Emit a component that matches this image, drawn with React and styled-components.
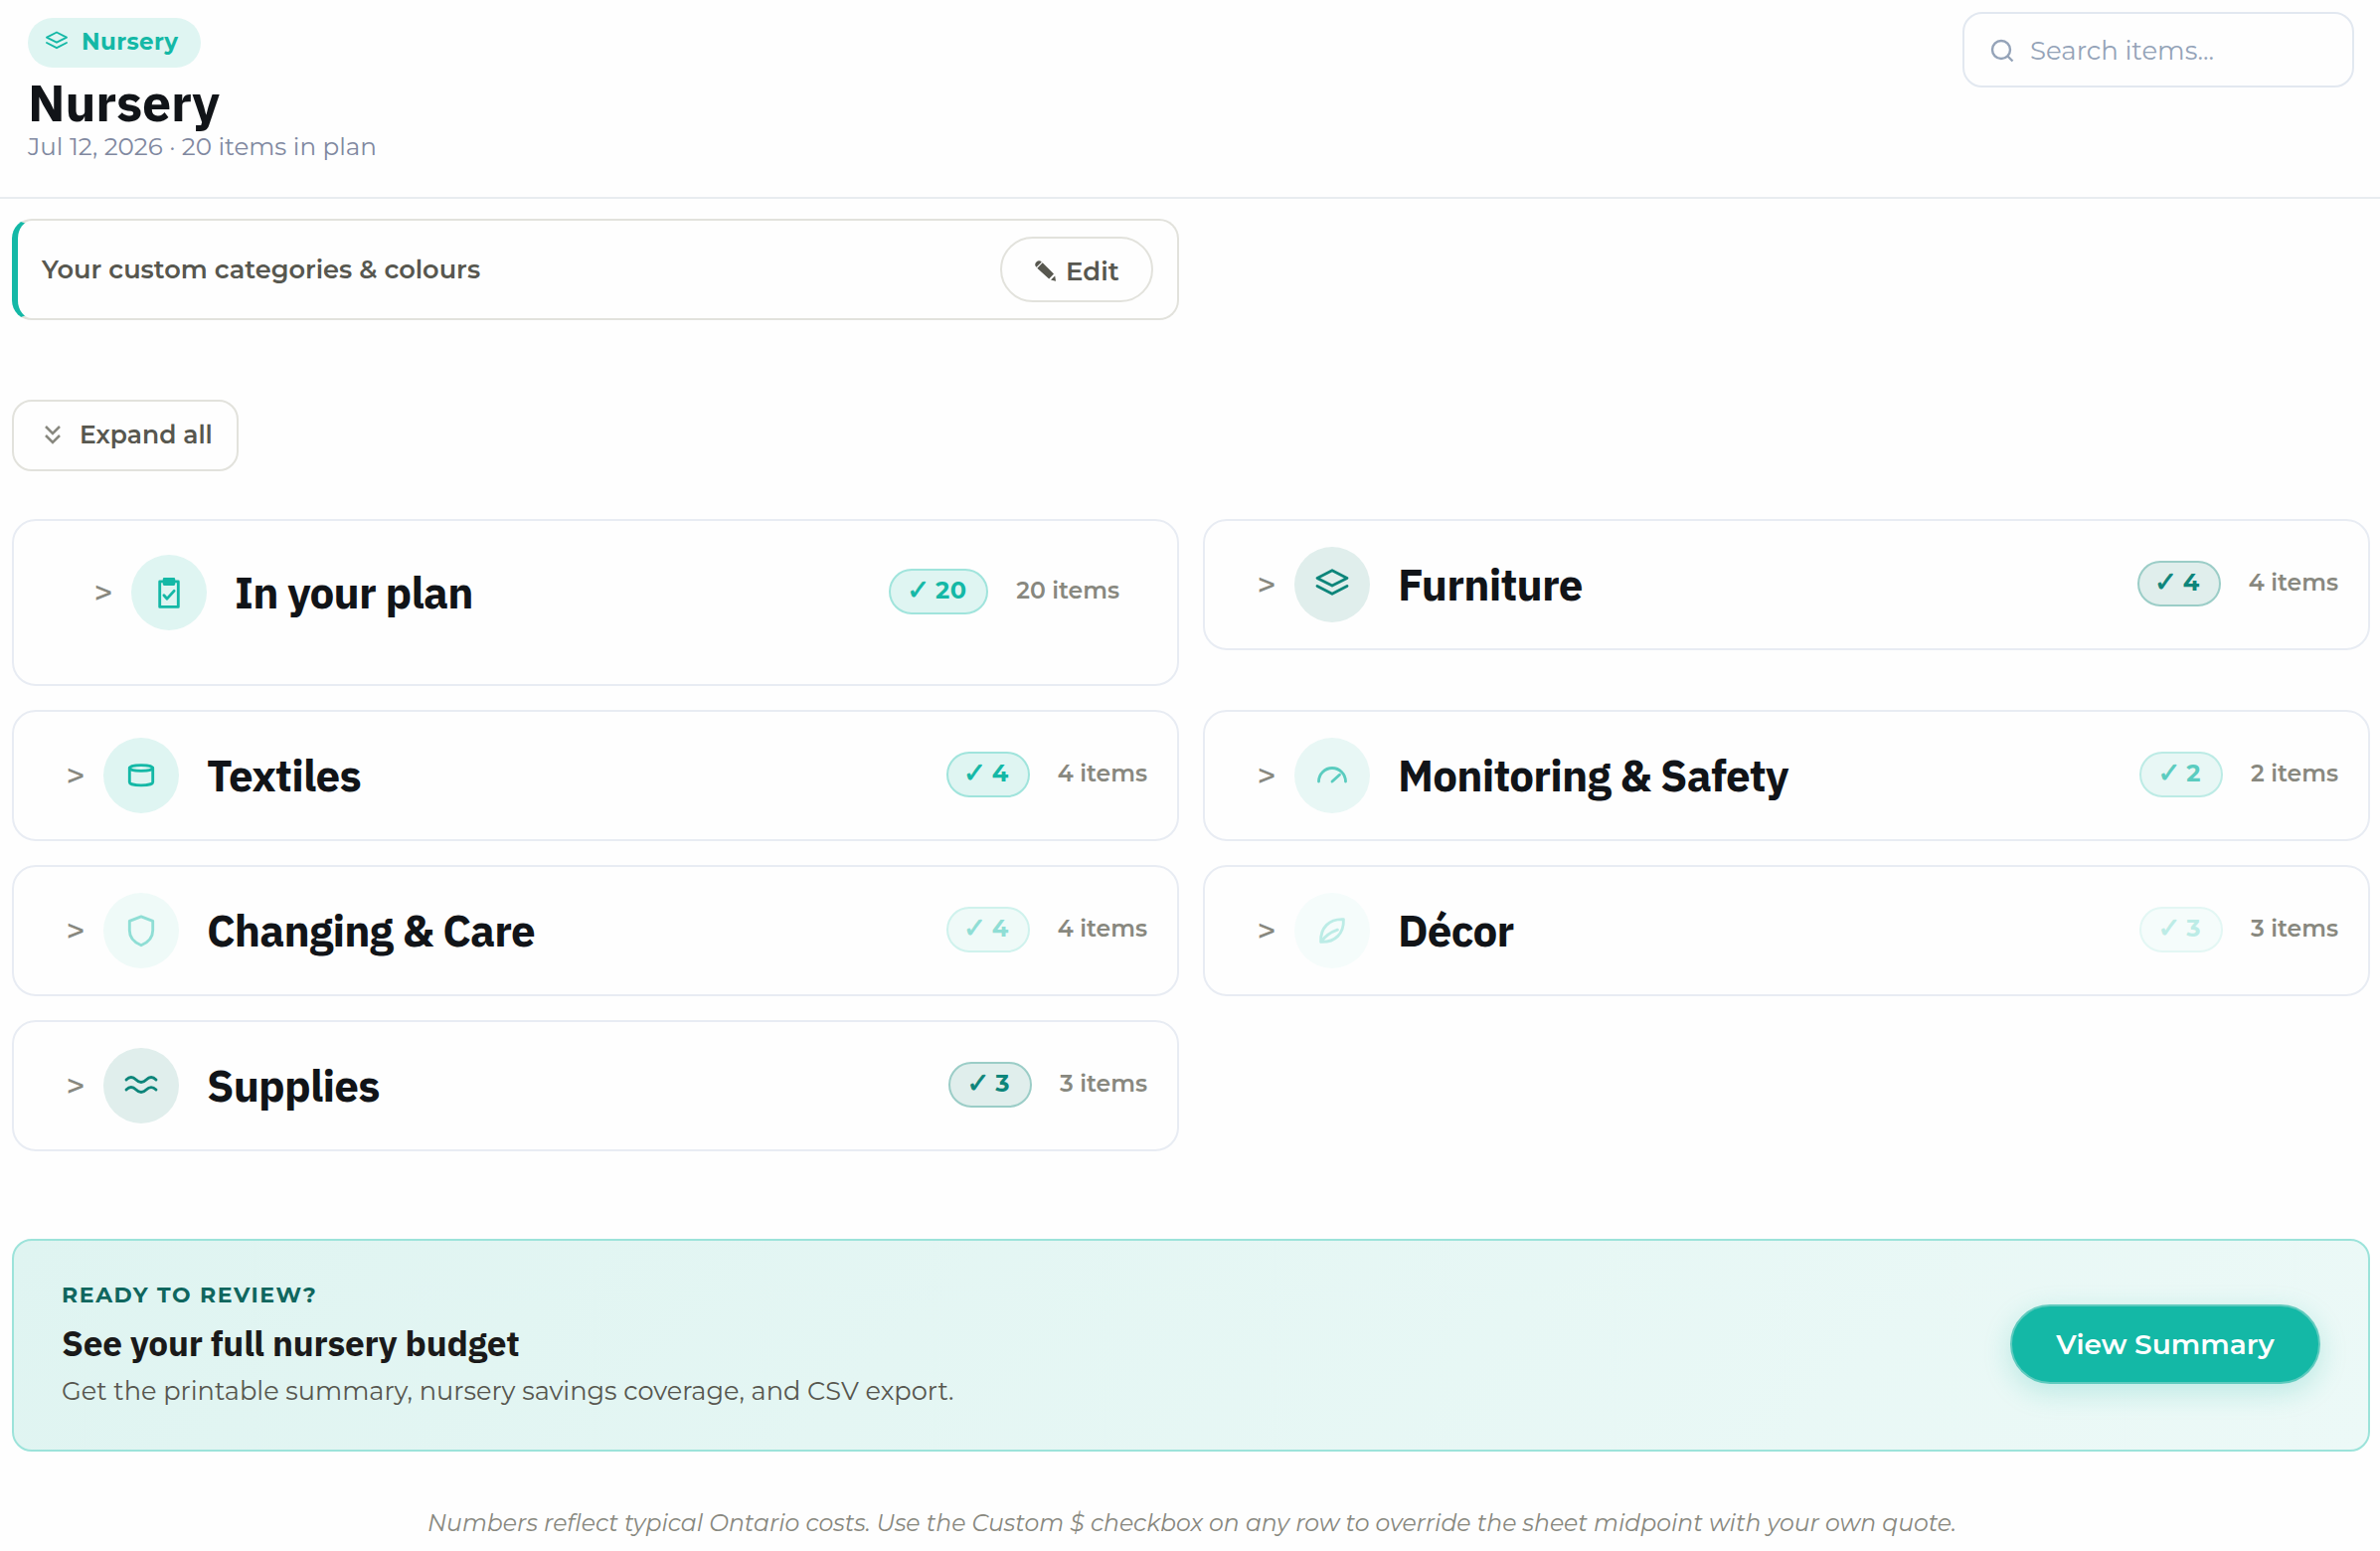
import styled, { createGlobalStyle } from 'styled-components';

const GlobalStyle = createGlobalStyle`
  * {
    box-sizing: border-box;
  }
  body {
    margin: 0;
    background: #fefefe;
    font-family: Montserrat, 'DejaVu Sans', sans-serif;
    color: #57574f;
  }
  button {
    font-family: inherit;
  }
`;

const headingFont = `'IBM Plex Sans', Roboto, 'Noto Sans', sans-serif`;

const Page = styled.div`
  min-height: 1560px;
`;

const Header = styled.header`
  display: flex;
  justify-content: space-between;
  align-items: flex-start;
  height: 200px;
  padding: 12px 26px 0 28px;
  border-bottom: 2px solid #e8ecf0;
`;

const HeaderInfo = styled.div`
  display: flex;
  flex-direction: column;
  align-items: flex-start;
  padding-top: 6px;
`;

const Pill = styled.div`
  display: flex;
  align-items: center;
  gap: 13px;
  width: 174px;
  height: 50px;
  padding: 0 0 2px 17px;
  border-radius: 25px;
  background: #dff5f2;
  color: #14b8a6;
  font-size: 23px;
  font-weight: 700;
  line-height: 28px;
  letter-spacing: 0.4px;
`;

const Title = styled.h1`
  margin: 7px 0 2px;
  font-family: ${headingFont};
  font-size: 52px;
  line-height: 55px;
  font-weight: 700;
  letter-spacing: -0.2px;
  color: #111418;
`;

const Subtitle = styled.div`
  font-size: 24.6px;
  line-height: 30px;
  color: #8088a0;
`;

const Search = styled.div`
  display: flex;
  align-items: center;
  gap: 16px;
  width: 394px;
  height: 76px;
  padding: 1px 0 0 26px;
  border: 2px solid #e2e8f0;
  border-radius: 20px;
  background: #fefefe;
  color: #94a3b8;
  font-size: 26px;
`;

const Main = styled.main`
  padding: 20px 10px 0 12px;
`;

const CustomBar = styled.div`
  display: flex;
  align-items: center;
  justify-content: space-between;
  width: 1174px;
  height: 102px;
  padding: 0 24px;
  border: 2px solid #e2e2dc;
  border-left: 6px solid #14b8a6;
  border-radius: 20px;
  font-size: 25.65px;
  font-weight: 600;
  line-height: 30px;
`;

const EditButton = styled.button`
  display: flex;
  align-items: center;
  gap: 9px;
  width: 154px;
  height: 66px;
  padding: 3px 0 0 33px;
  border: 2px solid #e2e2dc;
  border-radius: 33px;
  background: transparent;
  color: #57574f;
  font-size: 26px;
  font-weight: 600;
`;

const ExpandButton = styled.button`
  display: flex;
  align-items: center;
  gap: 16px;
  width: 228px;
  height: 72px;
  margin: 80px 0 48px;
  padding: 0 0 2px 28px;
  border: 2px solid #e2e2dc;
  border-radius: 20px;
  background: transparent;
  color: #57574f;
  font-size: 25px;
  font-weight: 600;
  white-space: nowrap;
`;

const Grid = styled.div`
  display: grid;
  grid-template-columns: 1fr 1fr;
  align-items: start;
  gap: 24px;
`;

const Card = styled.section`
  display: flex;
  align-items: center;
  height: ${(props) => (props.$nested ? 168 : 132)}px;
  padding: ${(props) => (props.$nested ? '0 58px 20px 80px' : '0 30px 0 52px')};
  border: 2px solid #e8ecf3;
  border-radius: 24px;
`;

const Arrow = styled.span`
  display: flex;
  justify-content: center;
  width: 20px;
  margin-right: 18px;
  color: #88887f;
  font-size: 33px;
  font-weight: 500;
  line-height: 36px;
`;

const IconCircle = styled.div`
  display: flex;
  align-items: center;
  justify-content: center;
  width: 76px;
  height: 76px;
  margin-right: 28px;
  border-radius: 50%;
  background: ${(props) => props.$tone.bg};
  color: ${(props) => props.$tone.fg};
`;

const CardTitle = styled.h2`
  flex: 1;
  margin: 0;
  font-family: ${headingFont};
  font-size: 44px;
  font-weight: 700;
  line-height: 56px;
  letter-spacing: -0.8px;
  color: #111418;
`;

const Badge = styled.div`
  display: flex;
  align-items: center;
  justify-content: center;
  gap: 8px;
  width: ${(props) => (props.$wide ? 100 : 84)}px;
  height: 46px;
  margin: 0 28px 2px 0;
  padding: 0 1px 2px 0;
  border: 2px solid ${(props) => props.$tone.border};
  border-radius: 23px;
  background: ${(props) => props.$tone.bg};
  color: ${(props) => props.$tone.fg};
  font-size: 24px;
  font-weight: 700;
  letter-spacing: 0.5px;
  line-height: 30px;
`;

const Check = styled.span`
  width: 18px;
  font-family: 'DejaVu Sans', sans-serif;
  font-size: 28px;
  letter-spacing: 0;
  text-indent: -3px;
  -webkit-text-stroke: 0.7px currentColor;
`;

const ItemCount = styled.div`
  padding-bottom: 5px;
  color: #88887f;
  font-size: 23.5px;
  font-weight: 600;
`;

const Review = styled.section`
  display: flex;
  justify-content: space-between;
  align-items: flex-start;
  height: 214px;
  margin-top: 88px;
  padding: 41px 48px 0;
  border: 2px solid #9ce3da;
  border-radius: 20px;
  background: linear-gradient(135deg, #dff4f1 0%, #ecf9f7 100%);
`;

const Eyebrow = styled.div`
  font-size: 22px;
  line-height: 28px;
  font-weight: 700;
  letter-spacing: 1.6px;
  color: #0f665e;
`;

const ReviewTitle = styled.h3`
  margin: 12px 0 9px;
  font-family: ${headingFont};
  font-size: 35.2px;
  line-height: 44px;
  font-weight: 700;
  letter-spacing: -0.2px;
  color: #1a1a1a;
`;

const ReviewText = styled.div`
  font-size: 25.62px;
  line-height: 34px;
`;

const SummaryButton = styled.button`
  width: 312px;
  height: 80px;
  margin-top: 23px;
  padding: 0;
  border: 2px solid #5fcabe;
  border-radius: 40px;
  background: #14b8a6;
  box-shadow: 0 8px 28px rgba(20, 184, 166, 0.22);
  color: #fff;
  font-size: 28px;
  font-weight: 600;
`;

const Footnote = styled.footer`
  margin-top: 56px;
  padding-left: 2px;
  text-align: center;
  font-size: 23.53px;
  line-height: 32px;
  font-style: italic;
  color: #88887f;
`;

const tones = {
  teal: { fg: '#14b8a6', bg: '#dff5f2', border: '#a0e4dc' },
  dark: { fg: '#0d857a', bg: '#e0eeec', border: '#9bcdc7' },
  medium: { fg: '#5accbf', bg: '#e8f7f5', border: '#bcebe5' },
  light: { fg: '#8fded5', bg: '#effaf8', border: '#cff2ed' },
  faint: { fg: '#bcece6', bg: '#f5fcfb', border: '#e3f7f4' },
};

const icons = {
  layers: <path d="M12 2.5 2 7.6l10 5.1 10-5.1-10-5.1zM2 13l10 5.2L22 13" />,
  clipboard: (
    <>
      <path d="M5.8 4.6h12.4v17H5.8z" />
      <path d="M8.8 3h6.4v3.3H8.8z" />
      <path d="m8.6 13.9 2.1 2.2 4.7-5.2" />
    </>
  ),
  basket: (
    <>
      <ellipse cx="12" cy="7" rx="7.8" ry="1.9" />
      <path d="M4.2 7v9.5c0 1.2 3.4 2.1 7.8 2.1s7.8-.9 7.8-2.1V7" />
    </>
  ),
  gauge: <path d="M3 16a9 9 0 0 1 18 0M12 16l5-4.5" />,
  shield: <path d="m12 2.6 7.8 3v6.2c0 5-3.4 8.2-7.8 10-4.4-1.8-7.8-5-7.8-10V5.6z" />,
  leaf: <path d="M4.4 19.6C4 10 10 4 19.6 4.4 20 14 14 20 4.4 19.6zM4.4 19.6c2.6-3.6 6.6-6.6 11.2-8.2" />,
  waves: (
    <path d="M2 8c2.2-2.2 4.4-2.2 6.6 0s4.6 2.2 6.8 0 4.4-2.2 6.6 0M2 14.7c2.2-2.2 4.4-2.2 6.6 0s4.6 2.2 6.8 0 4.4-2.2 6.6 0" />
  ),
};

const Icon = ({ name, size = 36, stroke = 1.9 }) => (
  <svg
    width={size}
    height={size}
    viewBox="0 0 24 24"
    fill="none"
    stroke="currentColor"
    strokeWidth={stroke}
    strokeLinecap="round"
    strokeLinejoin="round"
  >
    {icons[name]}
  </svg>
);

const categories = [
  { name: 'In your plan', count: 20, icon: 'clipboard', tone: tones.teal, nested: true },
  { name: 'Furniture', count: 4, icon: 'layers', tone: tones.dark },
  { name: 'Textiles', count: 4, icon: 'basket', tone: tones.teal },
  { name: 'Monitoring & Safety', count: 2, icon: 'gauge', tone: tones.medium },
  { name: 'Changing & Care', count: 4, icon: 'shield', tone: tones.light },
  { name: 'Décor', count: 3, icon: 'leaf', tone: tones.faint },
  { name: 'Supplies', count: 3, icon: 'waves', tone: tones.dark },
];

const Category = ({ name, count, icon, tone, nested }) => (
  <Card $nested={nested}>
    <Arrow>&gt;</Arrow>
    <IconCircle $tone={tone}>
      <Icon name={icon} />
    </IconCircle>
    <CardTitle>{name}</CardTitle>
    <Badge $tone={tone} $wide={count > 9}>
      <Check>✓</Check>
      <span>{count}</span>
    </Badge>
    <ItemCount>{count} items</ItemCount>
  </Card>
);

const App = () => (
  <Page>
    <GlobalStyle />
    <Header>
      <HeaderInfo>
        <Pill>
          <Icon name="layers" size={24} />
          Nursery
        </Pill>
        <Title>Nursery</Title>
        <Subtitle>Jul 12, 2026 · 20 items in plan</Subtitle>
      </HeaderInfo>
      <Search>
        <svg width="24" height="24" viewBox="0 0 24 24" fill="none" stroke="currentColor" strokeWidth="2.4">
          <circle cx="11" cy="11" r="9" />
          <path d="m17.5 17.5 5 5" />
        </svg>
        Search items...
      </Search>
    </Header>
    <Main>
      <CustomBar>
        Your custom categories & colours
        <EditButton>
          <svg width="22" height="22" viewBox="0 0 22 22" fill="currentColor">
            <path d="M1.5 6.8A3.6 3.6 0 0 1 6.8 1.5zM2.3 7.7l5.4-5.4L19 13.5 14.2 18.4zM16 19.400l4.200-3.900.8 5.300z" />
          </svg>
          Edit
        </EditButton>
      </CustomBar>
      <ExpandButton>
        <svg width="22" height="22" viewBox="0 0 22 22" fill="none" stroke="#88887f" strokeWidth="2.5">
          <path d="m4 3 7 7 7-7M4 12l7 7 7-7" />
        </svg>
        Expand all
      </ExpandButton>
      <Grid>
        {categories.map((category) => (
          <Category key={category.name} {...category} />
        ))}
      </Grid>
      <Review>
        <div>
          <Eyebrow>READY TO REVIEW?</Eyebrow>
          <ReviewTitle>See your full nursery budget</ReviewTitle>
          <ReviewText>Get the printable summary, nursery savings coverage, and CSV export.</ReviewText>
        </div>
        <SummaryButton>View Summary</SummaryButton>
      </Review>
      <Footnote>
        Numbers reflect typical Ontario costs. Use the Custom $ checkbox on any row to override the sheet midpoint
        with your own quote.
      </Footnote>
    </Main>
  </Page>
);

export default App;
